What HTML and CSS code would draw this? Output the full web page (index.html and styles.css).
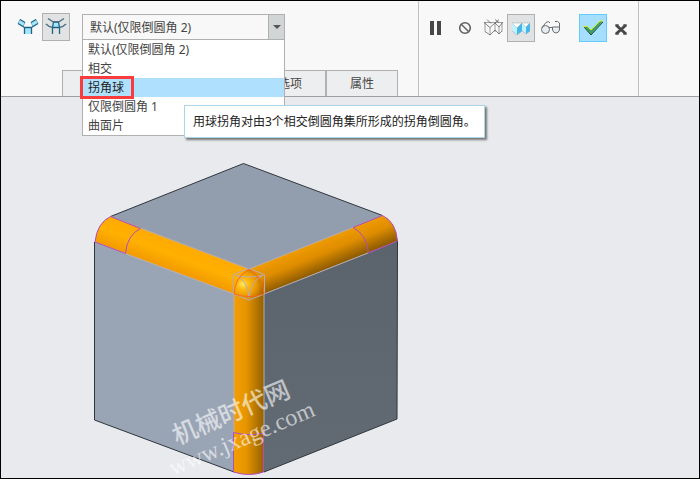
FILE: index.html
```html
<!DOCTYPE html>
<html lang="zh-CN">
<head>
    <meta charset="UTF-8">
    <meta name="viewport" content="width=device-width, initial-scale=1.0">
    <title>倒圆角</title>
    <link rel="stylesheet" href="styles.css">
</head>
<body>
    <div class="app">
        <header class="dashboard">
            <section class="panel panel-options">
                <div class="tools">
                    <button class="tool" aria-label="集模式">
                        <svg width="22" height="20" viewBox="0 0 22 20">
                            <path d="M7.500 10.500h7V17h-7zM3 2.500l5 3-2 4-5-3zM19 2.500l-5 3 2 4 5-3z" fill="#a5e6ff"/>
                            <path d="M3 2.500L1 6.500M8 5.500L6 9.500M19 2.500l2 4M14 5.500l2 4" fill="none" stroke="#7fb4cb"/>
                            <path d="M7.500 17v-6.500h7V17M3 2.500l5 3M1 6.500l5 3 1.500 1M19 2.500l-5 3M21 6.500l-5 3-1.500 1" fill="none" stroke="#1d6483" stroke-width="1.300"/>
                        </svg>
                    </button>
                    <button class="tool active" aria-label="过渡模式">
                        <svg width="22" height="20" viewBox="0 0 22 20">
                            <path d="M8.500 5h5l1.500 5.500H7z" fill="#a5e6ff"/>
                            <path d="M7.500 17v-6.500L8.500 5h5l1 5.500V17M7.500 10.500h7" fill="none" stroke="#1d6483" stroke-width="1.300"/>
                            <path d="M3 1.500Q7 5 11 5t8-3.500M1 7q3 3 6.500 3.500M21 7q-3 3-6.500 3.500" fill="none" stroke="#4b6f80" stroke-width="1.300"/>
                        </svg>
                    </button>
                    <div class="combo">
                        <select class="combo-select" aria-label="过渡类型">
                            <option>默认(仅限倒圆角 2)</option>
                        </select>
                        <span class="combo-arrow"></span>
                        <ul class="menu" role="listbox">
                            <li role="option">默认(仅限倒圆角 2)</li>
                            <li role="option">相交</li>
                            <li role="option" class="selected" aria-selected="true">拐角球<span class="mark"></span></li>
                            <li role="option">仅限倒圆角 1</li>
                            <li role="option">曲面片</li>
                        </ul>
                        <div class="tooltip" role="tooltip">用球拐角对由3个相交倒圆角集所形成的拐角倒圆角。</div>
                    </div>
                </div>
                <nav class="tabs">
                    <span class="tab tab-wide"></span>
                    <button class="tab">选项</button>
                    <button class="tab">属性</button>
                </nav>
            </section>

            <section class="panel panel-actions">
                <div class="group">
                    <button class="tool" aria-label="暂停">
                        <svg width="20" height="20" viewBox="0 0 20 20"><path d="M5 3h4v14H5zM12 3h4v14h-4z" fill="#484848"/></svg>
                    </button>
                    <button class="tool" aria-label="无预览">
                        <svg width="20" height="20" viewBox="0 0 20 20"><path d="M6 6l8 8" stroke="#666" stroke-width="1.600"/><circle cx="10" cy="10" r="5.300" fill="none" stroke="#606060" stroke-width="1.600"/></svg>
                    </button>
                </div>
                <div class="group group-tight">
                    <button class="tool" aria-label="分离预览">
                        <svg width="22" height="20" viewBox="0 0 22 20">
                            <path d="M2 4.500h18M3 4.500v9M8 9.500V17M13 5v9M17 9v7M20 4.500v9" fill="none" stroke="#777" stroke-width=".7"/>
                            <path d="M3 13.500L8 17l5-5 4 4 3-3M2 4.500l6 5 9-8M13 5l4 4 4-5M5 1.500l4 4M13 1.500l4 3" fill="none" stroke="#555" stroke-width=".7"/>
                        </svg>
                    </button>
                    <button class="tool active" aria-label="连接预览">
                        <svg width="22" height="20" viewBox="0 0 22 20">
                            <path d="M2 5h18l-4 4-4-4-5 5z" fill="#fff" stroke="#999" stroke-width=".5"/>
                            <path d="M2 5l5 5v7l-5-4zM12 5l4 4v7l-4-3z" fill="#c3f0fb"/>
                            <path d="M7 10l5-5v8l-5 4zM16 9l4-4v8l-4 3z" fill="#43b9e9"/>
                            <path d="M2 13l5 4 5-4 4 3 4-3" fill="none" stroke="#8aa5b0" stroke-width=".5"/>
                        </svg>
                    </button>
                </div>
                <button class="tool" aria-label="校验">
                    <svg width="22" height="20" viewBox="0 0 22 20">
                        <g fill="#e6eef4" stroke="#6c6c6c"><circle cx="5.500" cy="11.500" r="4"/><path d="M12.500 9h7v3q-1 3-3.500 3t-3.500-3z"/></g>
                        <path d="M2 9.500L6 4.500l2.500-1L10 5M15 3.500h2.500l2 1.500v5M9 9.500h4" fill="none" stroke="#6c6c6c"/>
                    </svg>
                </button>
                <div class="group group-tight group-confirm">
                    <button class="tool confirm" aria-label="确定">
                        <svg width="22" height="20" viewBox="0 0 22 20"><path d="M2 9l3-1 4 4 9-9h3L9 17z" fill="#3fa164"/><path d="M2 9l7 8L21 4" fill="none" stroke="#244e2d"/><path d="M1 9l4-1 4 4 9-9h3" fill="none" stroke="#dfed21"/></svg>
                    </button>
                    <button class="tool" aria-label="取消">
                        <svg width="20" height="20" viewBox="0 0 20 20"><path d="M5 7l10 9M15 7L5 16" stroke="#484848" stroke-width="3"/><path d="M4 7h4M12 7h4M4 16h4M12 16h4" stroke="#484848"/></svg>
                    </button>
                </div>
            </section>
        </header>

        <main class="viewer">
            <svg class="model" viewBox="1 97 698 381" preserveAspectRatio="xMinYMin meet">
                <defs>
                    <linearGradient id="barLeft" gradientUnits="userSpaceOnUse" x1="189" y1="247" x2="179" y2="274">
                        <stop offset="0" stop-color="#ffaa00"/>
                        <stop offset=".45" stop-color="#ffb000"/>
                        <stop offset="1" stop-color="#f29900"/>
                    </linearGradient>
                    <linearGradient id="barRight" gradientUnits="userSpaceOnUse" x1="316" y1="242" x2="327" y2="269">
                        <stop offset="0" stop-color="#f09b00"/>
                        <stop offset=".45" stop-color="#df8d00"/>
                        <stop offset="1" stop-color="#8c5a00"/>
                    </linearGradient>
                    <linearGradient id="barDown">
                        <stop offset="0" stop-color="#f49e00"/>
                        <stop offset=".4" stop-color="#e79600"/>
                        <stop offset="1" stop-color="#936000"/>
                    </linearGradient>
                    <radialGradient id="ball" cx=".3" cy=".55" r=".75">
                        <stop offset="0" stop-color="#ffed62"/>
                        <stop offset=".25" stop-color="#ffba13"/>
                        <stop offset=".6" stop-color="#eb9800"/>
                        <stop offset="1" stop-color="#9b6200"/>
                    </radialGradient>
                    <linearGradient id="faceRight" x1="0" y1="0" x2="0" y2="1">
                        <stop offset="0" stop-color="#5b646d"/>
                        <stop offset="1" stop-color="#626a73"/>
                    </linearGradient>
                </defs>

                <!-- faces -->
                <path d="M110.500 216.500L243.500 163.500L382.500 215.500L249 270z" fill="#929dad"/>
                <path d="M94.500 242L234 294V472L94.500 420z" fill="#99a4b4"/>
                <path d="M264 294L397.500 241L397 419L264 472z" fill="url(#faceRight)"/>
                <path d="M110.500 216.500L243.500 163.500L382.500 215.500M94.500 242V420L234 472M397.500 241L397 419L264 472" fill="none" stroke="#30363c"/>

                <!-- rounds -->
                <path d="M110.500 216.500Q97 223 95 242L234 294L249 269z" fill="url(#barLeft)"/>
                <path d="M382.500 215.500Q396 222 397.500 241L264 294L249 269z" fill="url(#barRight)"/>
                <path d="M233.500 290H264V472Q249 477 233.500 472z" fill="url(#barDown)"/>
                <path d="M140 228L249 269L353 227.500M126 254L234 294V434M368 253L264 294V434" fill="none" stroke="#b3adb5"/>

                <!-- corner ball -->
                <path d="M249 269Q235 277 234 294Q249 299 264 294Q263 277 249 269z" fill="url(#ball)"/>
                <path d="M233.500 274.500L249 268.500L264.500 274.500V294L249 300L233.500 294zM235 275Q249 279 264 275M237 276Q248 281 249 298Q251 281 262 276" fill="none" stroke="#b8acaf"/>
                <path d="M249 269Q235 277 234 294Q249 299 264 294Q263 277 249 269z" fill="none" stroke="#ff661c"/>

                <!-- segment ends -->
                <path d="M140.500 228.500L110.500 216.500Q97 223 95 242L125.500 253.500Q127 235 140.500 228.500M353 227.500L382.500 215.500Q396 222 397.500 241L368.500 253Q367 235 353 227.500M233.500 472V432.500Q249 436.500 263.500 433V472Q249 477 233.500 472" fill="none" stroke="#b34bc6"/>

                <g class="watermark" transform="translate(177 445) rotate(-23)">
                    <text class="watermark-name" x="0" y="0">机械时代网</text>
                </g>
                <g class="watermark" transform="translate(173 476) rotate(-23)">
                    <text class="watermark-site" x="0" y="0">www.jxage.com</text>
                </g>
            </svg>
        </main>
    </div>
</body>
</html>
```

FILE: styles.css
```css
* {
    box-sizing: border-box;
}

body {
    margin: 0;
    font-family: "Noto Sans", "Noto Sans CJK SC", sans-serif;
    font-size: 12px;
    line-height: 19px;
    color: #444;
}

button,
select {
    margin: 0;
    padding: 0;
    font: inherit;
    color: inherit;
}

.app {
    display: flex;
    flex-direction: column;
    min-height: 100vh;
    border: 1px solid #000;
    background-color: #e8eaee;
}

/* Dashboard */
.dashboard {
    display: flex;
    background-color: #f8f8f8;
    border-bottom: 1px solid #a0a0a0;
}

.panel {
    border-right: 1px solid #bfc1c4;
}

.panel-options {
    display: flex;
    flex-direction: column;
    gap: 29px;
    padding: 12px 20px 0 13px;
}

.panel-actions {
    display: flex;
    align-items: flex-start;
    gap: 2px;
    padding: 13px 3px 0 2px;
}

.tools {
    display: flex;
}

.tool {
    display: flex;
    align-items: center;
    justify-content: center;
    width: 28px;
    height: 28px;
    border: 1px solid transparent;
    background: none;
}

.tool svg {
    flex-shrink: 0;
}

.tool.active {
    border-color: #b0b0b0;
    background-color: #e1e2e4;
}

.tool.confirm {
    border-color: #67caff;
    background-color: #a5deff;
}

.group {
    display: flex;
    gap: 2px;
}

.group-tight {
    gap: 0;
}

.group:first-child {
    margin-right: -2px;
}

.group-confirm {
    margin-left: 12px;
}

/* Combo box */
.combo {
    position: relative;
    display: flex;
    width: 203px;
    height: 26px;
    margin: 1px 0 0 12px;
    border: 1px solid #b0b0b0;
    background-color: #f8f8f8;
}

.combo-select {
    appearance: none;
    flex: 1;
    padding-left: 7px;
    border: none;
    background: none;
}

.combo-arrow {
    display: flex;
    align-items: center;
    justify-content: center;
    width: 16px;
    border-left: 1px solid #b0b0b0;
    background-color: #d1d5d6;
}

.combo-arrow::before {
    content: "";
    border: 4px solid transparent;
    border-top-color: #555;
    border-bottom: none;
}

.menu {
    position: absolute;
    z-index: 2;
    top: 24px;
    left: -1px;
    right: -1px;
    margin: 0;
    padding: 0;
    list-style: none;
    border: 1px solid #b0b0b0;
    background-color: #fff;
}

.menu li {
    position: relative;
    height: 19px;
    padding-left: 5px;
}

.menu .selected {
    background-color: #afe1ff;
    color: #222;
}

.mark {
    position: absolute;
    top: -2px;
    left: -3px;
    width: 54px;
    height: 23px;
    border: 3px solid #fa3c3c;
}

.tooltip {
    position: absolute;
    z-index: 3;
    top: 90px;
    left: 101px;
    padding: 6px 8px;
    border: 1px solid #a9d5e6;
    background-color: #fff;
    box-shadow: 2px 2px 2px #777;
    color: #222;
    white-space: nowrap;
}

/* Tabs */
.tabs {
    display: flex;
    margin-left: 48px;
}

.tab {
    width: 72px;
    height: 26px;
    border: 1px solid #b0b0b0;
    border-bottom: none;
    background-color: #edeef0;
}

.tab-wide {
    width: 192px;
}

/* Model */
.viewer {
    flex: 1;
    display: flex;
}

.model {
    display: block;
    width: 100%;
}

.watermark {
    fill: #fff;
    opacity: .6;
}

.watermark-name {
    font-family: "Noto Sans CJK SC", sans-serif;
    font-size: 25px;
    font-weight: 500;
}

.watermark-site {
    font-family: "Liberation Serif", serif;
    font-size: 24px;
}
```
